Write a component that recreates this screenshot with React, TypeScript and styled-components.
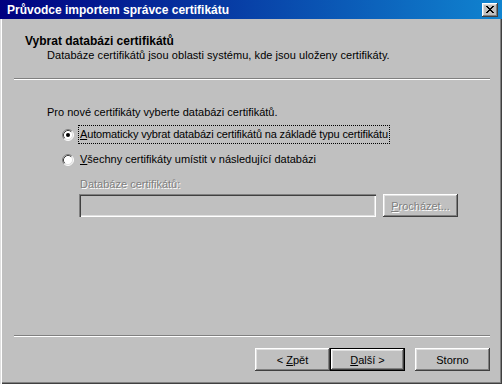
import React from 'react';
import styled, { createGlobalStyle } from 'styled-components';

const GlobalStyle = createGlobalStyle`
    html, body {
        margin: 0;
        padding: 0;
        background: #c0c0c0;
        overflow: hidden;
    }
    body {
        font-family: 'Liberation Sans', Arial, sans-serif;
        font-size: 11px;
        color: #000;
    }
`;

const Window = styled.div`
    width: 502px;
    height: 384px;
    display: flex;
    flex-direction: column;
    background: #c0c0c0;
`;

const TitleBar = styled.div`
    height: 19px;
    flex: none;
    display: flex;
    align-items: center;
    justify-content: space-between;
    padding: 0 4px 0 7px;
    background: linear-gradient(to right, #000080, #1084d0);
    color: #fff;
    font-size: 12px;
    font-weight: bold;
    white-space: nowrap;
`;

const CloseButton = styled.div`
    width: 16px;
    height: 14px;
    display: flex;
    align-items: center;
    justify-content: center;
    background: #c0c0c0;
    box-shadow: inset -1px -1px #404040, inset 1px 1px #fff, inset -2px -2px #808080, inset 2px 2px #dfdfdf;
`;

const Body = styled.div`
    flex: 1;
    display: flex;
    flex-direction: column;
    padding: 0 2px 2px 2px;
    box-shadow: inset 1px 0 #dfdfdf, inset 2px 0 #fff, inset -1px -1px #404040, inset -2px -2px #808080;
`;

const Header = styled.div`
    height: 59px;
    box-sizing: border-box;
    padding: 15px 0 0 23px;
`;

const HeaderTitle = styled.div`
    font-size: 12px;
    font-weight: bold;
    line-height: 14px;
`;

const HeaderText = styled.div`
    margin: 1px 0 0 22px;
    line-height: 13px;
    letter-spacing: 0.05px;
`;

const Separator = styled.div`
    flex: none;
    border-top: 1px solid #808080;
    border-bottom: 1px solid #fff;
    margin: 0 10px 0 12px;
`;

const Content = styled.div`
    flex: 1;
    padding: 26px 0 0 45px;
`;

const Line = styled.div`
    line-height: 13px;
`;

const RadioList = styled.div`
    display: flex;
    flex-direction: column;
    gap: 6px;
    margin: 6px 0 0 15px;
`;

const RadioRow = styled.div`
    display: flex;
    align-items: center;
    height: 19px;
    gap: 4px;
`;

const RadioLabel = styled.span<{ $focused?: boolean }>`
    display: block;
    height: 17px;
    line-height: 17px;
    padding: 0 1px;
    border: 1px dotted ${(p) => (p.$focused ? '#000' : 'transparent')};
    white-space: nowrap;
    letter-spacing: ${(p) => (p.$focused ? '-0.15px' : '0')};
`;

const DisabledLabel = styled.div`
    margin: 9px 0 0 33px;
    line-height: 13px;
    color: #808080;
    text-shadow: 1px 1px 0 #fff;
`;

const FieldRow = styled.div`
    display: flex;
    gap: 7px;
    margin: 3px 0 0 32px;
`;

const TextField = styled.div`
    width: 297px;
    height: 23px;
    background: #c0c0c0;
    box-shadow: inset 1px 1px #808080, inset 2px 2px #404040, inset -1px -1px #fff, inset -2px -2px #dfdfdf;
`;

const Button = styled.div<{ $default?: boolean; $disabled?: boolean; $gap?: number }>`
    width: 75px;
    height: 23px;
    box-sizing: border-box;
    display: flex;
    align-items: center;
    justify-content: center;
    margin-left: ${(p) => p.$gap ?? 0}px;
    background: #c0c0c0;
    color: ${(p) => (p.$disabled ? '#808080' : '#000')};
    text-shadow: ${(p) => (p.$disabled ? '1px 1px 0 #fff' : 'none')};
    border: ${(p) => (p.$default ? '1px solid #000' : 'none')};
    box-shadow: inset -1px -1px #404040, inset 1px 1px #fff, inset -2px -2px #808080, inset 2px 2px #dfdfdf;
    white-space: nowrap;
`;

const Footer = styled.div`
    flex: none;
    display: flex;
    justify-content: flex-end;
    padding: 11px 10px 11px 0;
`;

const CloseGlyph = () => (
    <svg width="8" height="7" viewBox="0 0 8 7" shapeRendering="crispEdges">
        <path
            d="M0 0h2v1H0zM6 0h2v1H6zM1 1h2v1H1zM5 1h2v1H5zM2 2h4v1H2zM3 3h2v1H3zM2 4h4v1H2zM1 5h2v1H1zM5 5h2v1H5zM0 6h2v1H0zM6 6h2v1H6z"
            fill="#000"
        />
    </svg>
);

const Radio = ({ checked }: { checked?: boolean }) => (
    <svg width="12" height="12" viewBox="0 0 12 12">
        <circle cx="6" cy="6" r="5" fill="#fff" />
        <path d="M2.11 9.89A5.5 5.5 0 0 1 9.89 2.11" stroke="#808080" fill="none" />
        <path d="M9.89 2.11A5.5 5.5 0 0 1 2.11 9.89" stroke="#fff" fill="none" />
        <path d="M2.82 9.18A4.5 4.5 0 0 1 9.18 2.82" stroke="#404040" fill="none" />
        <path d="M9.18 2.82A4.5 4.5 0 0 1 2.82 9.18" stroke="#dfdfdf" fill="none" />
        {checked && <circle cx="6" cy="6" r="2" fill="#000" />}
    </svg>
);

const App = () => {
    return (
        <>
            <GlobalStyle />
            <Window>
                <TitleBar>
                    <span>Průvodce importem správce certifikátu</span>
                    <CloseButton>
                        <CloseGlyph />
                    </CloseButton>
                </TitleBar>
                <Body>
                    <Header>
                        <HeaderTitle>Vybrat databázi certifikátů</HeaderTitle>
                        <HeaderText>Databáze certifikátů jsou oblasti systému, kde jsou uloženy certifikáty.</HeaderText>
                    </Header>
                    <Separator />
                    <Content>
                        <Line>Pro nové certifikáty vyberte databázi certifikátů.</Line>
                        <RadioList>
                            <RadioRow>
                                <Radio checked />
                                <RadioLabel $focused>
                                    <u>A</u>utomaticky vybrat databázi certifikátů na základě typu certifikátu
                                </RadioLabel>
                            </RadioRow>
                            <RadioRow>
                                <Radio />
                                <RadioLabel>
                                    <u>V</u>šechny certifikáty umístit v následující databázi
                                </RadioLabel>
                            </RadioRow>
                        </RadioList>
                        <DisabledLabel>Databáze certifikátů:</DisabledLabel>
                        <FieldRow>
                            <TextField />
                            <Button $disabled>
                                <span>
                                    <u>P</u>rocházet...
                                </span>
                            </Button>
                        </FieldRow>
                    </Content>
                    <Separator />
                    <Footer>
                        <Button>
                            <span>
                                &lt; <u>Z</u>pět
                            </span>
                        </Button>
                        <Button $default>
                            <span>
                                <u>D</u>alší &gt;
                            </span>
                        </Button>
                        <Button $gap={10}>Storno</Button>
                    </Footer>
                </Body>
            </Window>
        </>
    );
};

export default App;
